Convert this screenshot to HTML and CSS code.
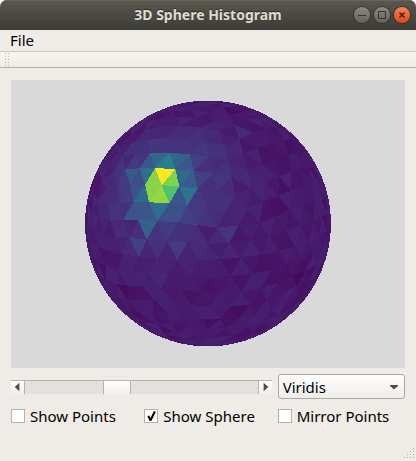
FILE: index.html
```html
<!DOCTYPE html>
<html lang="en">
<head>
<meta charset="utf-8">
<title>3D Sphere Histogram</title>
<link rel="stylesheet" href="styles.css">
</head>
<body>
<div class="window">
  <header class="titlebar">
    <h1 class="title">3D Sphere Histogram</h1>
    <div class="window-buttons">
      <button class="wbtn" type="button" aria-label="Minimize"><svg viewBox="0 0 16 16"><path d="M4 8.5h8"/></svg></button>
      <button class="wbtn" type="button" aria-label="Maximize"><svg viewBox="0 0 16 16"><path d="M4.500 4.500h7v7h-7z"/></svg></button>
      <button class="wbtn close" type="button" aria-label="Close"><svg viewBox="0 0 16 16"><path d="M5.500 5.500l5 5M10.500 5.500l-5 5"/></svg></button>
    </div>
  </header>
  <nav class="menubar"><button class="menu" type="button">File</button></nav>
  <div class="toolbar"><span class="handle"></span></div>
  <main class="content">
    <div class="view"><svg id="sphere" class="sphere" viewBox="0 0 394 288" role="img" aria-label="Sphere histogram"></svg></div>
    <div class="controls">
      <div class="scrollbar">
        <button class="step" type="button" aria-label="Decrease"><svg viewBox="0 0 14 14"><path d="M9 2v9L4 6.500z"/></svg></button>
        <input class="slider" type="range" min="0" max="100" value="38" aria-label="Resolution">
        <button class="step right" type="button" aria-label="Increase"><svg viewBox="0 0 14 14"><path d="M5 2v9l5-4.500z"/></svg></button>
      </div>
      <div class="combo">
        <select aria-label="Colour map"><option>Viridis</option></select>
        <svg class="arrow" viewBox="0 0 8 5"><path d="M0 0h8v1L4.500 4h-1L0 1z"/></svg>
      </div>
      <label class="check"><input type="checkbox"><span>Show Points</span></label>
      <label class="check"><input type="checkbox" checked><span>Show Sphere</span></label>
      <label class="check"><input type="checkbox"><span>Mirror Points</span></label>
    </div>
  </main>
  <footer class="statusbar">
    <svg class="grip" viewBox="0 0 11 11"><path d="M9 0h1v1h-1zM6 3h1v1h-1zM9 3h1v1h-1zM3 6h1v1h-1zM6 6h1v1h-1zM9 6h1v1h-1zM0 9h1v1h-1zM3 9h1v1h-1zM6 9h1v1h-1zM9 9h1v1h-1z"/></svg>
  </footer>
</div>
<script src="sphere.js"></script>
</body>
</html>
```
FILE: styles.css
```css
* { box-sizing: border-box; }
body {
  margin: 0;
  background: #fff;
  color: #000;
  font: 15px/20px "Noto Sans", "Open Sans", sans-serif;
}
button, select, input { font: inherit; color: inherit; margin: 0; padding: 0; }
.window {
  min-height: 100vh;
  display: flex;
  flex-direction: column;
  background: #efebe7;
  border-radius: 7px 7px 0 0;
}
.titlebar {
  display: grid;
  grid-template-columns: 1fr auto 1fr;
  align-items: center;
  height: 30px;
  padding: 0 6px;
  border-radius: 7px 7px 0 0;
  background: linear-gradient(#5b5850, #3d3b36);
  box-shadow: inset 0 1px #68655c;
}
.title {
  grid-column: 2;
  margin: 0;
  color: #dfdbd2;
  font-size: 14px;
  line-height: 20px;
  font-weight: 700;
  text-shadow: 0 -1px #2c2b28;
}
.window-buttons { display: flex; justify-content: flex-end; gap: 4px; }
.wbtn {
  width: 16px;
  height: 16px;
  border: 0;
  border-radius: 50%;
  background: linear-gradient(#8b8980, #63615a);
  box-shadow: 0 0 0 1px #35332f;
}
.wbtn svg { display: block; width: 16px; height: 16px; fill: none; stroke: #35332f; }
.close { background: linear-gradient(#f5825c, #df4a16); }
.close svg { stroke: #4c1d08; stroke-width: 1.500; }
.menubar { height: 21px; padding: 0 10px; }
.menu { display: block; border: 0; background: none; line-height: 21px; }
.toolbar {
  height: 17px;
  padding: 1px 5px;
  border-top: 1px solid #cbc7c3;
  border-bottom: 1px solid #b4b0ac;
  background: linear-gradient(#f8f5f1, #efebe6);
}
.handle {
  display: block;
  width: 5px;
  height: 14px;
  background: radial-gradient(circle at 0 0, #b9b5b1 1px, transparent 1px) 0 0 / 3px 3px;
}
.content {
  flex: 1;
  display: flex;
  flex-direction: column;
  gap: 6px;
  padding: 12px 11px 0;
}
.view { flex: 1; display: flex; background: #d9d9d9; }
.sphere { display: block; width: 100%; }
.controls {
  display: grid;
  grid-template-columns: repeat(3, 1fr);
  gap: 7px 6px;
  align-items: center;
}
.scrollbar {
  grid-column: span 2;
  display: flex;
  height: 14px;
  border-top: 1px solid #b6b2ae;
  background: #e3e1dd;
}
.step {
  width: 14px;
  border: 0;
  border-right: 1px solid #b6b2ae;
  background: linear-gradient(#fff, #f1eeeb);
}
.step.right { border-right: 0; border-left: 1px solid #b6b2ae; }
.step svg { display: block; width: 13px; height: 13px; fill: #4c4c4c; }
.slider { flex: 1; min-width: 0; height: 13px; appearance: none; background: #e3e1dd; }
.slider::-webkit-slider-thumb {
  appearance: none;
  width: 28px;
  height: 13px;
  border: solid #b6b2ae;
  border-width: 0 1px;
  background: linear-gradient(#fff, #f3f0ed);
}
.combo { position: relative; }
.combo select {
  display: block;
  width: 100%;
  height: 25px;
  padding: 0 4px;
  appearance: none;
  border: 1px solid #aca8a4;
  border-radius: 3px;
  background: linear-gradient(#fff, #efece9);
}
.arrow { position: absolute; right: 7px; top: 11px; width: 8px; height: 5px; fill: #4c4c4c; pointer-events: none; }
.check { display: flex; align-items: center; gap: 5px; white-space: nowrap; }
.check input {
  appearance: none;
  flex: none;
  width: 14px;
  height: 14px;
  border: 1px solid #b6b2ae;
  background: #fff;
}
.check input:checked::before {
  content: "";
  display: block;
  width: 12px;
  height: 12px;
  background: #000;
  clip-path: polygon(17% 50%, 32% 46%, 43% 66%, 72% 8%, 88% 14%, 50% 92%, 36% 92%);
}
.statusbar { display: flex; justify-content: flex-end; align-items: flex-end; height: 35px; padding: 0 1px 2px; }
.grip { width: 11px; height: 11px; fill: #b6b2ae; shape-rendering: crispEdges; }
```
FILE: sphere.js
```js
// Geodesic sphere, three subdivisions, coloured per face with the viridis map.
const RADIUS = 123, CX = 197, CY = 143.5, DIST = 9;
const VIRIDIS = [[68,1,84],[72,36,117],[65,68,135],[53,95,141],[42,120,142],[33,145,140],[34,168,132],[68,191,112],[122,209,81],[189,223,38],[253,231,37]];

const dot = (a, b) => a[0]*b[0] + a[1]*b[1] + a[2]*b[2];
const unit = a => { const l = Math.hypot(...a); return a.map(v => v / l); };
const cross = (a, b) => [a[1]*b[2]-a[2]*b[1], a[2]*b[0]-a[0]*b[2], a[0]*b[1]-a[1]*b[0]];
const mid = (a, b) => unit(a.map((v, i) => v + b[i]));

// Frame whose z axis points at the histogram peak.
const peak = unit([-0.342, 0.283, 0.896]);
const right = unit([0.934, -0.06, 0.375]);
const up = unit(cross(peak, right));
const side = cross(up, peak);
const rotate = v => side.map((s, i) => v[0]*s + v[1]*up[i] + v[2]*peak[i]);

const PHI = (1 + Math.sqrt(5)) / 2;
const verts = [];
for (const s of [-1, 1]) for (const t of [-PHI, PHI]) verts.push([s, 0, t], [0, t, s], [t, s, 0]);
let faces = [];
const near = (a, b) => Math.hypot(a[0]-b[0], a[1]-b[1], a[2]-b[2]) < 2.1;
for (let i = 0; i < 12; i++) for (let j = i + 1; j < 12; j++) for (let k = j + 1; k < 12; k++)
  if (near(verts[i], verts[j]) && near(verts[j], verts[k]) && near(verts[i], verts[k]))
    faces.push([verts[i], verts[j], verts[k]].map(v => rotate(unit(v))));
for (let n = 0; n < 3; n++) faces = faces.flatMap(([a, b, c]) => {
  const p = mid(a, b), q = mid(b, c), r = mid(c, a);
  return [[a, p, r], [p, b, q], [r, q, c], [p, q, r]];
});

const focal = RADIUS * Math.sqrt(DIST * DIST - 1);
const project = v => { const k = focal / (DIST - v[2]); return [CX + v[0]*k, CY - v[1]*k]; };
const noise = (x, y) => { const s = Math.sin(x * 12.9898 + y * 78.233) * 43758.5453; return s - Math.floor(s); };
const colour = t => {
  const f = Math.min(Math.max(t, 0), 0.999) * 10, i = Math.floor(f);
  return `rgb(${VIRIDIS[i].map((v, c) => Math.round(v + (VIRIDIS[i+1][c] - v) * (f - i)))})`;
};

const BINS = [
  [151,94,1], [141,100,.82], [161,99,.81], [140,110,.82], [150,116,.84], [161,110,.72],
  [156,82,.43], [146,78,.34], [167,78,.32], [133,97,.36], [125,93,.28], [174,97,.34],
  [151,128,.36], [139,128,.28], [162,128,.3], [130,115,.34], [174,117,.38],
  [139,147,.31], [130,165,.19], [119,130,.25], [151,150,.18], [162,146,.21],
  [192,153,.08], [122,149,.1], [194,93,.22], [214,150,.15], [202,180,.14],
  [242,145,.04], [224,202,.13], [284,197,.02], [224,228,.03], [222,35,.03],
  [246,85,.03], [229,48,.12], [116,213,.03], [171,185,.14], [169,165,.17],
  [144,235,.03], [137,195,.12]
];

let shapes = '';
for (const face of faces) {
  const centre = unit(face[0].map((v, i) => v + face[1][i] + face[2][i]));
  if (centre[2] < 0.02) continue;
  const pts = face.map(project);
  const x = (pts[0][0] + pts[1][0] + pts[2][0]) / 3, y = (pts[0][1] + pts[1][1] + pts[2][1]) / 3;
  const angle = Math.acos(Math.min(1, dot(centre, peak)));
  let level = 0.042 + 0.17 * Math.exp(-((angle / 0.46) ** 2)) + 0.048 * noise(Math.round(x), Math.round(y));
  if (angle < 0.25) level += 0.06;
  const bin = BINS.find(b => Math.hypot(b[0] - x, b[1] - y) < 5);
  if (bin) level = bin[2];
  shapes += `<polygon points="${pts.map(p => p.map(v => v.toFixed(1)).join()).join(' ')}" fill="${colour(level)}"/>`;
}
document.getElementById('sphere').innerHTML =
  `<clipPath id="disc"><circle cx="${CX}" cy="${CY}" r="${RADIUS}"/></clipPath>` +
  `<circle cx="${CX}" cy="${CY}" r="${RADIUS}" fill="#481567" shape-rendering="crispEdges"/>` +
  `<g clip-path="url(#disc)" shape-rendering="crispEdges">${shapes}</g>`;
```
